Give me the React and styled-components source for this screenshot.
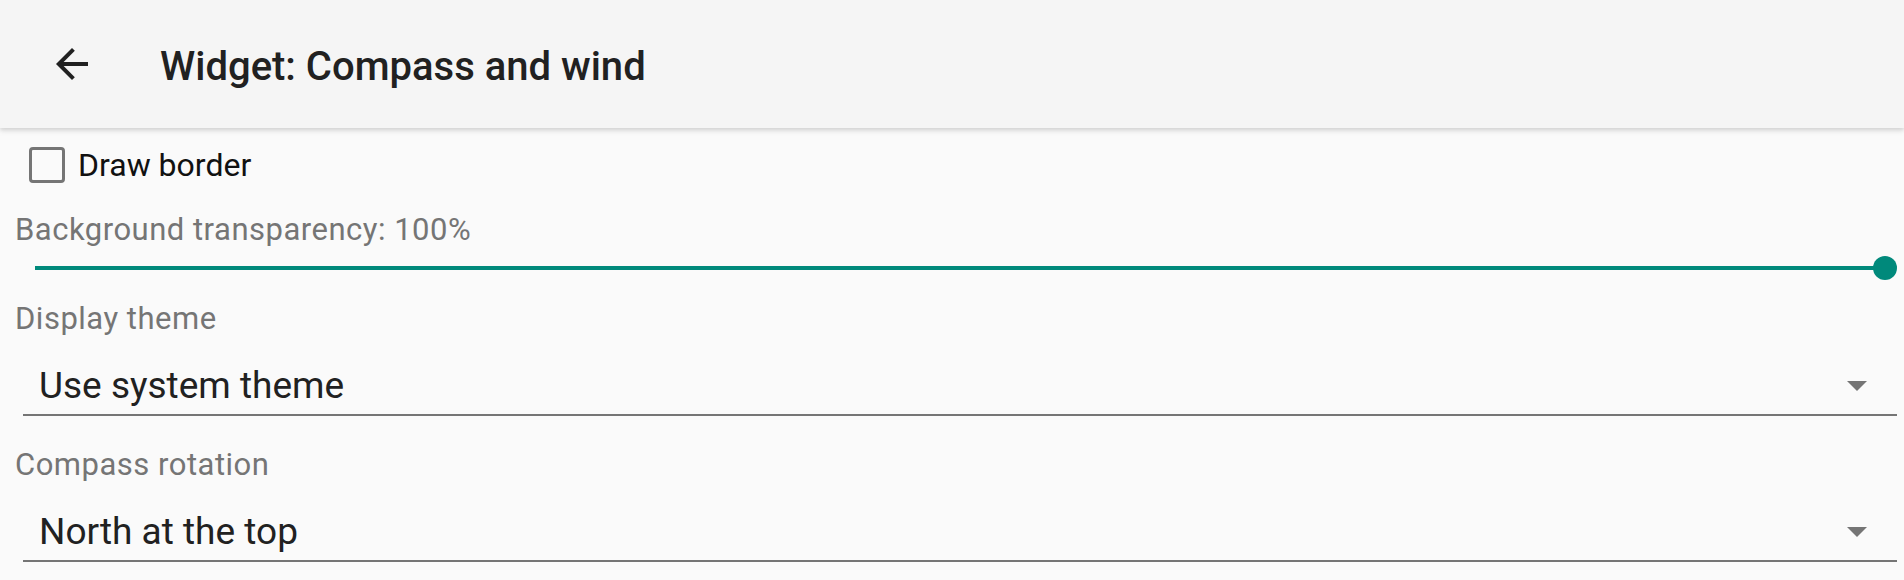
import styled, { createGlobalStyle } from 'styled-components'

const GlobalStyle = createGlobalStyle`
  html, body {
    margin: 0;
    padding: 0;
    background: #fafafa;
    font-family: Roboto, 'Noto Sans', 'Liberation Sans', sans-serif;
  }
`

const Page = styled.div`
  width: 1904px;
  height: 580px;
  overflow: hidden;
  background: #fafafa;
`

const Toolbar = styled.header`
  position: relative;
  z-index: 1;
  height: 128px;
  display: flex;
  align-items: center;
  padding-left: 48px;
  background: #f5f5f5;
  box-shadow: 0 2px 4px rgba(0, 0, 0, 0.12), 0 4px 6px rgba(0, 0, 0, 0.05);
`

const NavButton = styled.button`
  width: 48px;
  height: 48px;
  padding: 0;
  border: 0;
  background: none;
  display: flex;
  svg {
    display: block;
  }
`

const Title = styled.h1`
  margin: 5px 0 0 64px;
  font-size: 40px;
  line-height: 48px;
  font-weight: 500;
  color: #212121;
`

const Content = styled.main`
  display: flex;
  flex-direction: column;
`

const CheckRow = styled.label`
  margin-top: 19px;
  padding-left: 29px;
  height: 36px;
  display: flex;
  align-items: center;
  gap: 13px;
`

const Box = styled.span`
  box-sizing: border-box;
  width: 36px;
  height: 36px;
  border: 3px solid #757575;
  border-radius: 4px;
`

const CheckText = styled.span`
  font-size: 32px;
  line-height: 36px;
  color: #111;
`

const Label = styled.div`
  margin-top: ${({ $gap }) => $gap}px;
  padding-left: 15px;
  font-size: 31px;
  line-height: 36px;
  letter-spacing: 0.5px;
  color: #757575;
`

const Slider = styled.div`
  height: 40px;
  display: flex;
  align-items: center;
  padding: 0 7px 0 35px;
`

const Track = styled.div`
  flex: 1;
  height: 4px;
  background: #00897b;
`

const Thumb = styled.div`
  width: 24px;
  height: 24px;
  margin-left: -12px;
  border-radius: 50%;
  background: #00897b;
`

const Spinner = styled.div`
  margin: 25px 7px 0 23px;
  height: 52px;
  display: flex;
  justify-content: space-between;
  padding: 0 30px 0 16px;
  border-bottom: 2px solid #757575;
`

const SpinnerText = styled.span`
  font-size: 37px;
  line-height: 48px;
  color: #212121;
`

const Caret = styled.span`
  margin-top: 19px;
  width: 0;
  height: 0;
  border-left: 10px solid transparent;
  border-right: 10px solid transparent;
  border-top: 10px solid #757575;
`

function BackArrow() {
  return (
    <svg width="48" height="48" viewBox="0 0 24 24">
      <path fill="#212121" d="M20 11H7.83l5.59-5.59L12 4l-8 8 8 8 1.41-1.41L7.83 13H20v-2z" />
    </svg>
  )
}

function Dropdown({ label, value, gap }) {
  return (
    <>
      <Label $gap={gap}>{label}</Label>
      <Spinner>
        <SpinnerText>{value}</SpinnerText>
        <Caret />
      </Spinner>
    </>
  )
}

export default function App() {
  return (
    <Page>
      <GlobalStyle />
      <Toolbar>
        <NavButton aria-label="Back">
          <BackArrow />
        </NavButton>
        <Title>Widget: Compass and wind</Title>
      </Toolbar>
      <Content>
        <CheckRow>
          <Box />
          <CheckText>Draw border</CheckText>
        </CheckRow>
        <Label $gap={29}>Background transparency: 100%</Label>
        <Slider>
          <Track />
          <Thumb />
        </Slider>
        <Dropdown label="Display theme" value="Use system theme" gap={13} />
        <Dropdown label="Compass rotation" value="North at the top" gap={31} />
      </Content>
    </Page>
  )
}
